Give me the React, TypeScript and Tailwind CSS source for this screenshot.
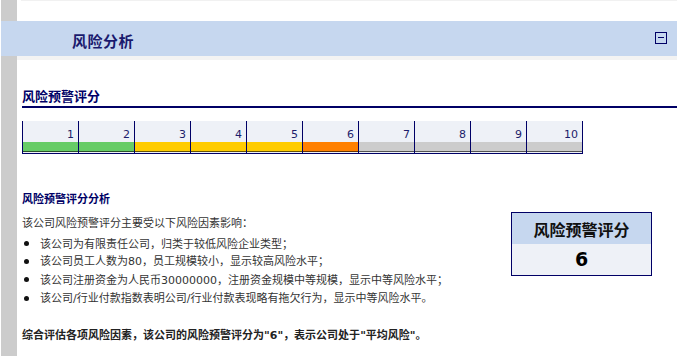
import type { ReactNode } from 'react';

const scores = [
  { n: 1, bar: 'bg-[#66cc66]' },
  { n: 2, bar: 'bg-[#66cc66]' },
  { n: 3, bar: 'bg-[#ffcc00]' },
  { n: 4, bar: 'bg-[#ffcc00]' },
  { n: 5, bar: 'bg-[#ffcc00]' },
  { n: 6, bar: 'bg-[#ff8000]' },
  { n: 7, bar: 'bg-[#cccccc]' },
  { n: 8, bar: 'bg-[#cccccc]' },
  { n: 9, bar: 'bg-[#cccccc]' },
  { n: 10, bar: 'bg-[#cccccc]' },
];

// latin runs (digits, quotes, slashes) in a Verdana-like face
function L({ children }: { children: ReactNode }) {
  return <span className="font-['DejaVu_Sans',sans-serif]">{children}</span>;
}

const factors: ReactNode[] = [
  <>该公司为有限责任公司，归类于较低风险企业类型；</>,
  <>
    该公司员工人数为<L>80</L>，员工规模较小，显示较高风险水平；
  </>,
  <>
    该公司注册资金为人民币<L>30000000</L>，注册资金规模中等规模，显示中等风险水平；
  </>,
  <>
    该公司<L>/</L>行业付款指数表明公司<L>/</L>行业付款表现略有拖欠行为，显示中等风险水平。
  </>,
];

export default function App() {
  return (
    <div className="h-[356px] w-[688px] overflow-hidden bg-white font-['Noto_Sans_CJK_SC',sans-serif] [text-spacing-trim:space-all]">
      {/* top strip */}
      <div className="flex h-[21px]">
        <div className="ml-[1px] w-[16px] bg-[#cccccc]" />
        <div className="w-[4px]" />
        <div className="h-[1px] w-[656px] bg-[#f1f1f1]" />
      </div>

      {/* section header */}
      <div className="ml-[1px] flex h-[35px] w-[676px] items-center justify-between bg-[#c6d7ef]">
        <span className="ml-[71px] mt-[5px] text-[15px] font-bold tracking-[0.5px] text-[#1a1a6e]">
          风险分析
        </span>
        <div className="mr-[10px] mb-[2px] flex h-[12px] w-[12px] items-center justify-center border-[1.5px] border-[#000066]">
          <div className="h-[1.5px] w-[6px] bg-[#000066]" />
        </div>
      </div>

      <div className="flex">
        <div className="ml-[1px] h-[300px] w-[16px] bg-[#cccccc]" />
        <div className="w-[660px]">
          <div className="h-[4px] bg-[#f3f3f3]" />

          <div className="mt-[28px] pl-[5px]">
            <h2 className="text-[13px] font-bold leading-[16px] text-[#000066]">风险预警评分</h2>
          </div>
          <div className="ml-[5px] mt-[2px] h-[2px] bg-[#000066]" />

          {/* score scale */}
          <div className="ml-[5px] mt-[13px] flex w-[561px] border-b border-r border-[#000066]">
            {scores.map((s) => (
              <div key={s.n} className="w-[56px] border-l border-[#000066]">
                <div className="flex h-[21px] items-end justify-end bg-[#eef1f7] pr-[4px] font-['DejaVu_Sans',sans-serif] text-[11px] leading-[14px] text-[#1c1c6b]">
                  {s.n}
                </div>
                <div className={`h-[10px] border-b border-black/60 ${s.bar}`} />
                <div className="h-[1px] bg-[#eef1f7]" />
              </div>
            ))}
          </div>

          {/* analysis */}
          <div className="flex pl-[5px]">
            <div className="flex-1">
              <h3 className="mt-[37px] h-[14px] text-[11px] font-bold leading-[14px] text-[#000066]">
                风险预警评分分析
              </h3>
              <p className="mt-[10px] h-[14px] text-[11px] leading-[14px] text-[#333333]">
                该公司风险预警评分主要受以下风险因素影响：
              </p>
              <ul className="mt-[5px] text-[11px] text-[#333333]">
                {factors.map((f, i) => (
                  <li key={i} className="flex h-[18.3px] items-center whitespace-nowrap">
                    <span className="ml-[2px] mr-[11px] h-[5px] w-[5px] shrink-0 rounded-full bg-[#111111]" />
                    <span className="leading-[14px]">{f}</span>
                  </li>
                ))}
              </ul>
              <p className="mt-[20px] h-[14px] whitespace-nowrap text-[11px] font-bold leading-[14px] text-[#222222]">
                综合评估各项风险因素，该公司的风险预警评分为<L>"6"</L>，表示公司处于<L>"</L>平均风险<L>"</L>。
              </p>
            </div>
            <div className="mr-[25px] mt-[58px] h-[64px] w-[141px] shrink-0 border border-[#000066]">
              <div className="flex h-[31px] items-center justify-center bg-[#c6d7ef] text-[16px] font-bold text-[#111111]">
                风险预警评分
              </div>
              <div className="flex h-[31px] items-center justify-center bg-[#eef1f7] font-['DejaVu_Sans',sans-serif] text-[19px] font-bold text-black">
                6
              </div>
            </div>
          </div>
        </div>
      </div>
    </div>
  );
}
